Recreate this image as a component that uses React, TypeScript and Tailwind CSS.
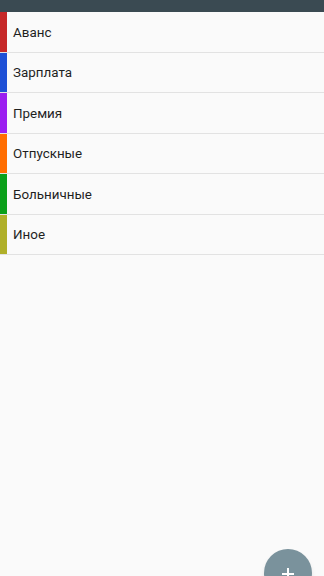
import React from "react";

const items = [
  { name: "Аванс", color: "bg-[#c62828]" },
  { name: "Зарплата", color: "bg-[#1e50d6]" },
  { name: "Премия", color: "bg-[#9b1ef0]" },
  { name: "Отпускные", color: "bg-[#ff6d00]" },
  { name: "Больничные", color: "bg-[#0aa01a]" },
  { name: "Иное", color: "bg-[#b0b02a]" },
];

export default function App() {
  return (
    <div className="relative w-[324px] h-[576px] overflow-hidden bg-[#fafafa] font-['Roboto',sans-serif]">
      <div className="h-[12px] bg-[#3a4a52]" />
      <div className="flex flex-col">
        {items.map((it) => (
          <div key={it.name} className="flex h-[40.5px] border-b-[1.5px] border-[#e2e2e2]">
            <div className={`w-[7px] ${it.color}`} />
            <div className="flex items-center pl-[6px] pt-[2px] text-[13.4px] text-[#1f1f1f]">{it.name}</div>
          </div>
        ))}
      </div>
      <div className="absolute left-[264px] top-[549px] w-[48px] h-[48px] rounded-full bg-[#7a929c] flex items-center justify-center shadow-md">
        <svg width="14" height="14" viewBox="0 0 14 14" className="mb-[-2px]">
          <path d="M7 1v12M1 7h12" stroke="white" strokeWidth="2" />
        </svg>
      </div>
    </div>
  );
}
